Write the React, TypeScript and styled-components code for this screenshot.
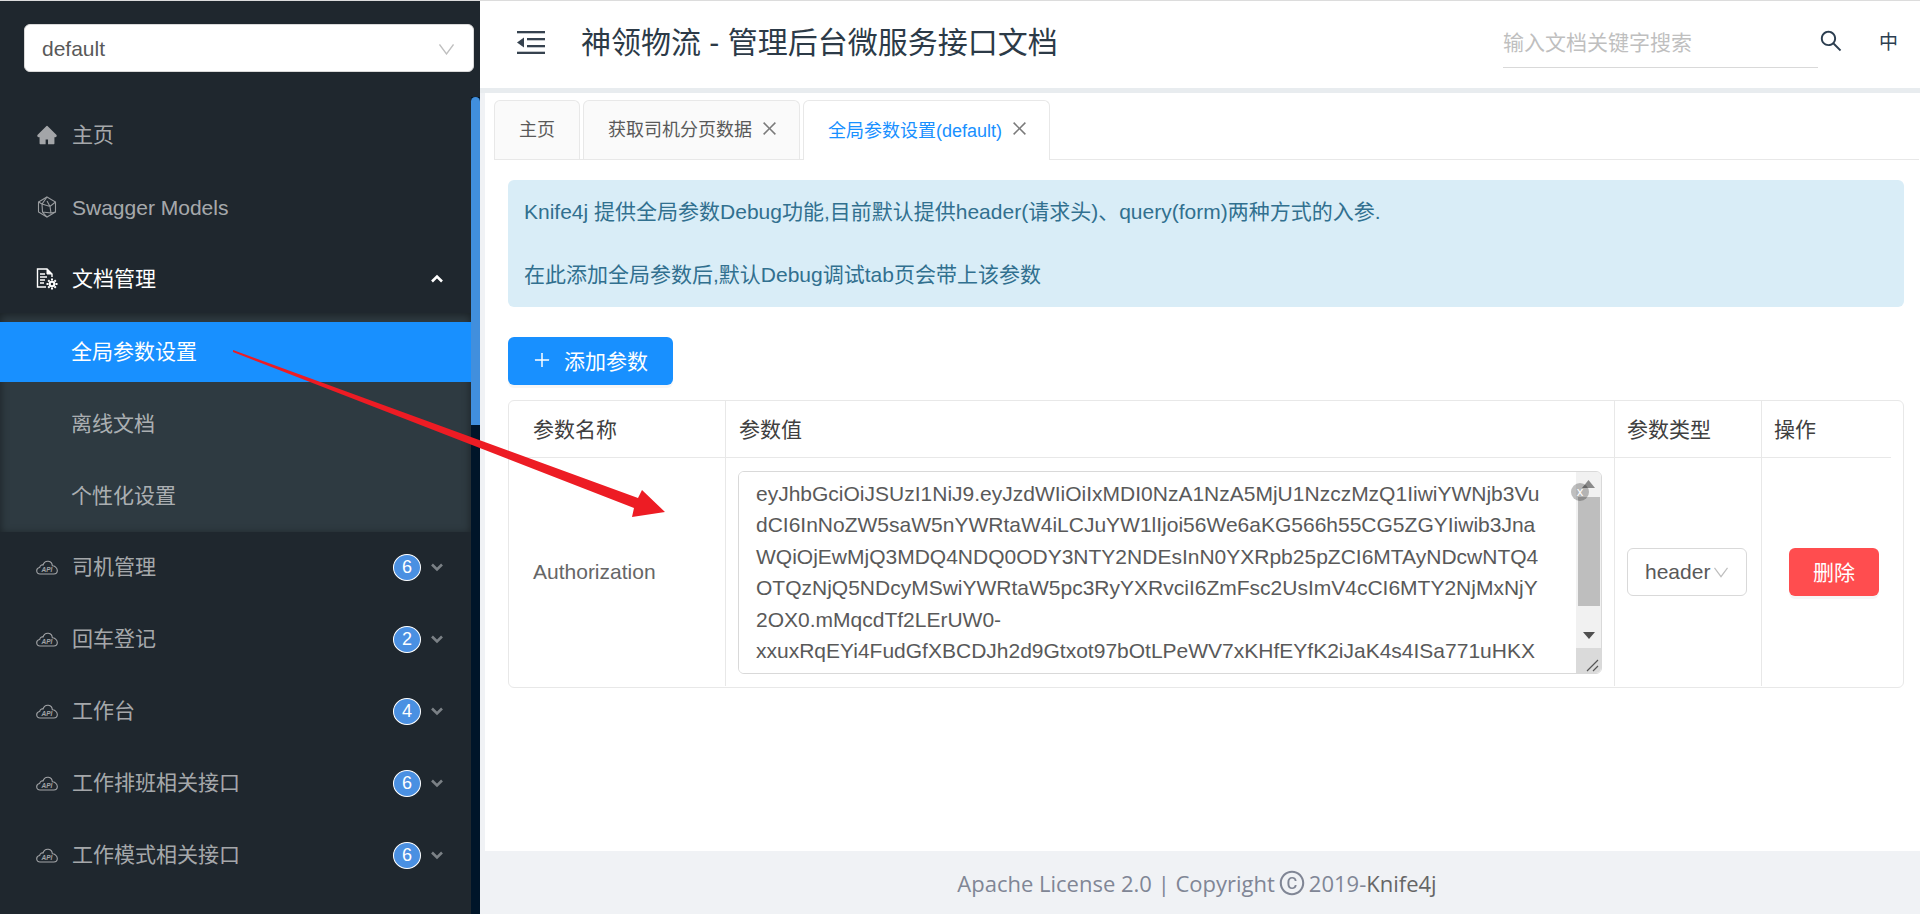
import React from 'react';
import styled, { createGlobalStyle } from 'styled-components';
import { AiFillHome, AiOutlineClose, AiOutlineCopyright, AiOutlinePlus, AiOutlineSearch } from 'react-icons/ai';

const FONT = '"Liberation Sans", "Noto Sans CJK SC", sans-serif';

const GlobalStyle = createGlobalStyle`
  html, body {
    margin: 0;
    padding: 0;
    height: 100%;
    overflow: hidden;
    font-family: ${FONT};
  }
  * {
    box-sizing: border-box;
  }
`;

const Page = styled.div`
  position: relative;
  display: flex;
  width: 1920px;
  height: 914px;
  border-top: 1px solid #dcdcdc;
  overflow: hidden;
`;

/* ---- sidebar ---- */
const Sidebar = styled.aside`
  display: flex;
  flex-direction: column;
  flex: 0 0 480px;
  background: #1f272e;
`;
const SelectWrap = styled.div`
  padding: 23px 6px 25px 24px;
`;
const VersionSelect = styled.div`
  display: flex;
  align-items: center;
  justify-content: space-between;
  height: 48px;
  padding: 2px 19px 0 17px;
  background: #fff;
  border: 1px solid #d9d9d9;
  border-radius: 6px;
  font-size: 21px;
  color: #595959;
`;
const SideBody = styled.div`
  display: flex;
  flex: 1;
  min-height: 0;
`;
const Menu = styled.nav`
  flex: 1;
  padding-top: 8px;
`;
const ScrollTrack = styled.div`
  flex: 0 0 9px;
  background: #001529;
`;
const ScrollThumb = styled.div`
  height: 328px;
  background: #418fdd;
  border-radius: 5px 5px 0 0;
`;
const MenuRow = styled.div<{ $open?: boolean; $tight?: boolean }>`
  display: flex;
  align-items: center;
  height: 60px;
  margin-bottom: ${(p) => (p.$tight ? '4px' : '12px')};
  padding: 0 28px 0 36px;
  font-size: 21px;
  color: ${(p) => (p.$open ? '#fff' : 'rgba(255, 255, 255, 0.62)')};
`;
const MenuIcon = styled.span`
  display: flex;
  align-items: center;
  justify-content: center;
  flex: 0 0 21px;
  height: 24px;
  margin-right: 15px;
  svg {
    display: block;
  }
`;
const MenuLabel = styled.span<{ $latin?: boolean }>`
  flex: 1;
  margin: ${(p) => (p.$latin ? '2px 0 0' : '0 0 5px -1px')};
`;
const Badge = styled.span`
  display: flex;
  align-items: center;
  justify-content: center;
  width: 28px;
  height: 27px;
  margin-right: 10px;
  border: 1.5px solid #fff;
  border-radius: 50%;
  background: #4a90e2;
  color: #fff;
  font-size: 18px;
`;
const SubMenu = styled.div`
  margin-bottom: 5px;
  padding: 9px 0 6px;
  background: #2e3a41;
  box-shadow: inset 0 2px 8px rgba(0, 0, 0, 0.45);
`;
const SubRow = styled.div<{ $active?: boolean }>`
  display: flex;
  align-items: center;
  height: 60px;
  padding: 0 0 5px 71px;
  font-size: 21px;
  background: ${(p) => (p.$active ? '#1890ff' : 'transparent')};
  color: ${(p) => (p.$active ? '#fff' : 'rgba(255, 255, 255, 0.62)')};
  & + & {
    margin-top: 12px;
  }
`;

/* ---- main ---- */
const Main = styled.main`
  display: flex;
  flex-direction: column;
  flex: 1;
  min-width: 0;
  background: #f0f2f5;
`;
const Header = styled.header`
  display: flex;
  align-items: center;
  flex: 0 0 92px;
  padding: 0 22px 8px 37px;
  background: #fff;
  border-bottom: 5px solid #e8ecef;
`;
const Toggle = styled.span`
  display: flex;
  margin: 4px 36px 0 0;
`;
const Title = styled.h1`
  flex: 1;
  margin: 0;
  padding-bottom: 2px;
  font-size: 30px;
  font-weight: 400;
  color: #2c3a47;
`;
const SearchBox = styled.div`
  display: flex;
  align-items: center;
  width: 315px;
  height: 48px;
  margin-top: 6px;
  padding-bottom: 4px;
  border-bottom: 1px solid #d9d9d9;
  font-size: 21px;
  color: #bfbfbf;
`;
const SearchBtn = styled.span`
  display: flex;
  margin-right: 35px;
  color: #2c3e50;
`;
const Lang = styled.span`
  font-size: 19px;
  color: #2c3e50;
`;

const Content = styled.div`
  display: flex;
  flex-direction: column;
  flex: 1;
  margin-left: 5px;
  background: #fff;
`;
const TabBar = styled.div`
  display: flex;
  gap: 3px;
  height: 67px;
  margin: 0 1px 0 9px;
  padding-top: 7px;
  border-bottom: 1.5px solid #e8e8e8;
`;
const Tab = styled.div<{ $active?: boolean; $closable?: boolean }>`
  display: flex;
  align-items: center;
  height: ${(p) => (p.$active ? '60px' : '59px')};
  padding: 0 ${(p) => (p.$closable ? '20px' : '24px')} 4px 24px;
  border: 1.5px solid #e8e8e8;
  border-bottom: 0;
  border-radius: 6px 6px 0 0;
  font-size: 18px;
  background: ${(p) => (p.$active ? '#fff' : '#fafafa')};
  color: ${(p) => (p.$active ? '#1890ff' : '#595959')};
`;
const TabClose = styled.span`
  display: flex;
  margin-left: 8px;
  color: #7a7a7a;
`;
const Panel = styled.section`
  padding: 20px 16px 0 23px;
`;
const Alert = styled.div`
  height: 127px;
  padding: 16px 16px;
  border-radius: 6px;
  background: #d9edf7;
  color: #31708f;
  font-size: 21px;
  line-height: 31.5px;
`;
const AddButton = styled.button`
  display: flex;
  align-items: center;
  width: 165px;
  height: 48px;
  margin: 30px 0 15px;
  padding: 0 0 2px 24px;
  border: 0;
  border-radius: 6px;
  background: #1890ff;
  box-shadow: 0 3px 0 rgba(0, 0, 0, 0.035);
  color: #fff;
  font: 21px ${FONT};
  svg {
    margin-right: 12px;
  }
`;
const ParamTable = styled.div`
  display: grid;
  grid-template-columns: 216px 889px 147px 1fr;
  grid-template-rows: 57px 228px;
  width: 1396px;
  height: 288px;
  border: 1.5px solid #e8e8e8;
  border-radius: 6px;
`;
const HeadCell = styled.div<{ $pad: number; $short?: boolean }>`
  display: flex;
  align-items: center;
  padding: 0 0 3px ${(p) => p.$pad}px;
  margin-right: ${(p) => (p.$short ? '12px' : '0')};
  border-bottom: 1.5px solid #e8e8e8;
  font-size: 21px;
  color: #404040;
  & + & {
    border-left: 1.5px solid #e8e8e8;
  }
`;
const BodyCell = styled.div<{ $pad: number }>`
  display: flex;
  align-items: center;
  padding-left: ${(p) => p.$pad}px;
  font-size: 21px;
  color: #666;
  & + & {
    border-left: 1.5px solid #e8e8e8;
  }
`;
const TokenBox = styled.div`
  position: relative;
  display: flex;
  width: 864px;
  height: 203px;
  border: 1.5px solid #d9d9d9;
  border-radius: 6px;
  overflow: hidden;
`;
const TokenText = styled.textarea`
  flex: 1;
  margin: 0;
  padding: 6px 0 0 17px;
  border: 0;
  outline: 0;
  resize: none;
  overflow: hidden;
  white-space: pre;
  font: 21px/31.6px ${FONT};
  color: #595959;
`;
const FakeScroll = styled.div`
  display: flex;
  flex-direction: column;
  align-items: center;
  flex: 0 0 25px;
  background: #f1f1f1;
`;
const ScrollBtn = styled.div`
  display: flex;
  align-items: center;
  justify-content: center;
  flex: 0 0 25px;
  width: 100%;
`;
const FakeThumb = styled.div`
  flex: 0 0 109px;
  width: 22px;
  background: #bebebe;
`;
const ScrollGap = styled.div`
  flex: 1;
`;
const Resizer = styled.div`
  display: flex;
  flex: 0 0 25px;
  width: 100%;
  background: #dadada;
`;
const ClearDot = styled.span`
  position: absolute;
  top: 11px;
  right: 12px;
  display: flex;
  align-items: center;
  justify-content: center;
  width: 18px;
  height: 18px;
  border-radius: 50%;
  background: rgba(0, 0, 0, 0.25);
  color: #fff;
  font-size: 13px;
  line-height: 1;
`;
const TypeSelect = styled.div`
  display: flex;
  align-items: center;
  justify-content: space-between;
  width: 120px;
  height: 48px;
  padding: 0 18px 0 17px;
  border: 1.5px solid #d9d9d9;
  border-radius: 6px;
  font-size: 21px;
  color: #595959;
`;
const DeleteButton = styled.button`
  width: 90px;
  height: 48px;
  padding: 0 0 3px;
  border: 0;
  border-radius: 6px;
  background: #ff4d4f;
  box-shadow: 0 3px 0 rgba(0, 0, 0, 0.035);
  color: #fff;
  font: 21px ${FONT};
`;
const Footer = styled.footer`
  display: flex;
  align-items: center;
  justify-content: center;
  flex: 0 0 63px;
  padding-right: 6px;
  font-family: "Open Sans", sans-serif;
  font-size: 22px;
  color: #808695;
  svg {
    margin: 0 3px;
  }
`;
const FooterLink = styled.span`
  color: #666;
`;
const Arrow = styled.svg`
  position: absolute;
  top: 0;
  left: 0;
  pointer-events: none;
`;

/* ---- drawn icons ---- */
const Chevron = ({ up, color, size = 12, weight = 2.6 }: { up?: boolean; color: string; size?: number; weight?: number }) => (
  <svg width={size} height={size} viewBox="0 0 12 12" fill="none" stroke={color} strokeWidth={weight}>
    <path d={up ? 'M1 8.5 6 3.5l5 5' : 'M1 3.5l5 5 5-5'} />
  </svg>
);
const ThinCaret = ({ width = 15, color = '#bfbfbf' }: { width?: number; color?: string }) => (
  <svg width={width} height="11" viewBox="0 0 15 11" fill="none" stroke={color} strokeWidth="1.3">
    <path d="M.5.5 7.5 10l7-9.5" />
  </svg>
);
const ModelIcon = () => (
  <svg width="20" height="22" viewBox="0 0 20 22" fill="none" stroke="#9a9da0" strokeWidth="1.1">
    <path d="M10 1l8.5 5v10L10 21l-8.5-5V6z" />
    <path d="M10 1 5 8l-3.5-2M5 8l.5 8 4.5 5M5 8l8 2.5 5.500-4.500M13 10.500 14 17l4.500-1M5.500 16 14 17M10 5l3 5.500" />
  </svg>
);
const DocGearIcon = () => (
  <svg width="22" height="22" viewBox="0 0 22 22" fill="none" stroke="#fff">
    <path d="M10 19H1.500V1H11l5 5v3" strokeWidth="1.4" />
    <path d="M11 1v5h5z" fill="#fff" strokeWidth="1" />
    <path d="M4 6h5M4 9h7M4 12h5M4 15h4" strokeWidth="1.4" />
    <circle cx="16" cy="16" r="2.300" strokeWidth="2" />
    <path d="M16 10.500v2M16 19.500v2M10.500 16h2M19.500 16h2M12.200 12.200l1.400 1.400M18.400 18.400l1.400 1.400M12.200 19.800l1.400-1.400M18.400 13.600l1.400-1.400" strokeWidth="2" />
  </svg>
);
const ApiCloud = () => (
  <svg width="22" height="15" viewBox="0 0 22 15" fill="none">
    <path
      d="M5 14H4C2 14 .7 12.600.7 10.800.7 9 2 7.700 3.700 7.500 4 5.500 5.600 4.600 7 5 8 2.300 10.200 1 12.400 1.300 14.800 1.700 16.200 3.500 16.300 5.800 18.500 5.800 21.300 7.800 21.300 10.500 21.300 12.600 19.600 14 17.800 14Z"
      stroke="#a3a5a8"
      strokeWidth="1.1"
    />
    <text x="11" y="11.600" textAnchor="middle" fontFamily="Liberation Sans, sans-serif" fontSize="6.500" fontStyle="italic" fontWeight="700" fill="#a3a5a8">
      API
    </text>
  </svg>
);
const OutdentIcon = () => (
  <svg width="28" height="23" viewBox="0 0 28 23" fill="#36424f">
    <rect x="0" y="0" width="28" height="2.300" />
    <rect x="10" y="7" width="18" height="2.300" />
    <rect x="10" y="14" width="18" height="2.300" />
    <rect x="0" y="20.700" width="28" height="2.300" />
    <path d="M7 6.500v10L0 11.500z" />
  </svg>
);

const groups = [
  { name: '司机管理', count: 6 },
  { name: '回车登记', count: 2 },
  { name: '工作台', count: 4 },
  { name: '工作排班相关接口', count: 6 },
  { name: '工作模式相关接口', count: 6 },
];

const TOKEN = [
  'eyJhbGciOiJSUzI1NiJ9.eyJzdWIiOiIxMDI0NzA1NzA5MjU1NzczMzQ1IiwiYWNjb3Vu',
  'dCI6InNoZW5saW5nYWRtaW4iLCJuYW1lIjoi56We6aKG566h55CG5ZGYIiwib3Jna',
  'WQiOjEwMjQ3MDQ4NDQ0ODY3NTY2NDEsInN0YXRpb25pZCI6MTAyNDcwNTQ4',
  'OTQzNjQ5NDcyMSwiYWRtaW5pc3RyYXRvciI6ZmFsc2UsImV4cCI6MTY2NjMxNjY',
  '2OX0.mMqcdTf2LErUW0-',
  'xxuxRqEYi4FudGfXBCDJh2d9Gtxot97bOtLPeWV7xKHfEYfK2iJaK4s4ISa771uHKX',
].join('\n');

export default function App() {
  return (
    <>
      <GlobalStyle />
      <Page>
        <Sidebar>
          <SelectWrap>
            <VersionSelect>
              default
              <ThinCaret />
            </VersionSelect>
          </SelectWrap>
          <SideBody>
            <Menu>
              <MenuRow>
                <MenuIcon>
                  <AiFillHome size={22} color="#a3a5a8" />
                </MenuIcon>
                <MenuLabel>主页</MenuLabel>
              </MenuRow>
              <MenuRow>
                <MenuIcon>
                  <ModelIcon />
                </MenuIcon>
                <MenuLabel $latin>Swagger Models</MenuLabel>
              </MenuRow>
              <MenuRow $open $tight>
                <MenuIcon>
                  <DocGearIcon />
                </MenuIcon>
                <MenuLabel>文档管理</MenuLabel>
                <Chevron up color="#fff" />
              </MenuRow>
              <SubMenu>
                <SubRow $active>全局参数设置</SubRow>
                <SubRow>离线文档</SubRow>
                <SubRow>个性化设置</SubRow>
              </SubMenu>
              {groups.map((g) => (
                <MenuRow key={g.name}>
                  <MenuIcon>
                    <ApiCloud />
                  </MenuIcon>
                  <MenuLabel>{g.name}</MenuLabel>
                  <Badge>{g.count}</Badge>
                  <Chevron color="#7b8186" />
                </MenuRow>
              ))}
            </Menu>
            <ScrollTrack>
              <ScrollThumb />
            </ScrollTrack>
          </SideBody>
        </Sidebar>

        <Main>
          <Header>
            <Toggle>
              <OutdentIcon />
            </Toggle>
            <Title>神领物流 - 管理后台微服务接口文档</Title>
            <SearchBox>输入文档关键字搜索</SearchBox>
            <SearchBtn>
              <AiOutlineSearch size={26} />
            </SearchBtn>
            <Lang>中</Lang>
          </Header>

          <Content>
            <TabBar>
              <Tab>主页</Tab>
              <Tab $closable>
                获取司机分页数据
                <TabClose>
                  <AiOutlineClose size={19} />
                </TabClose>
              </Tab>
              <Tab $active $closable>
                全局参数设置(default)
                <TabClose>
                  <AiOutlineClose size={19} />
                </TabClose>
              </Tab>
            </TabBar>
            <Panel>
              <Alert>
                Knife4j 提供全局参数Debug功能,目前默认提供header(请求头)、query(form)两种方式的入参.
                <br />
                <br />
                在此添加全局参数后,默认Debug调试tab页会带上该参数
              </Alert>
              <AddButton>
                <AiOutlinePlus size={20} />
                添加参数
              </AddButton>
              <ParamTable>
                <HeadCell $pad={24}>参数名称</HeadCell>
                <HeadCell $pad={13}>参数值</HeadCell>
                <HeadCell $pad={12}>参数类型</HeadCell>
                <HeadCell $pad={12} $short>
                  操作
                </HeadCell>
                <BodyCell $pad={24}>Authorization</BodyCell>
                <BodyCell $pad={12}>
                  <TokenBox>
                    <TokenText readOnly wrap="off" defaultValue={TOKEN} />
                    <FakeScroll>
                      <ScrollBtn>
                        <svg width="13" height="8" viewBox="0 0 13 8" fill="#8a8a8a">
                          <path d="M6.500 0 13 8H0z" />
                        </svg>
                      </ScrollBtn>
                      <FakeThumb />
                      <ScrollGap />
                      <ScrollBtn>
                        <svg width="12" height="7" viewBox="0 0 12 7" fill="#505050">
                          <path d="M0 0h12L6 7z" />
                        </svg>
                      </ScrollBtn>
                      <Resizer>
                        <svg width="25" height="25" viewBox="0 0 25 25" fill="none" stroke="#555" strokeWidth="1.2">
                          <path d="M11 23 22 12M17 23l5-5" />
                        </svg>
                      </Resizer>
                    </FakeScroll>
                    <ClearDot>x</ClearDot>
                  </TokenBox>
                </BodyCell>
                <BodyCell $pad={12}>
                  <TypeSelect>
                    header
                    <ThinCaret width={14} />
                  </TypeSelect>
                </BodyCell>
                <BodyCell $pad={27}>
                  <DeleteButton>删除</DeleteButton>
                </BodyCell>
              </ParamTable>
            </Panel>
          </Content>

          <Footer>
            Apache License 2.0 | Copyright
            <AiOutlineCopyright size={28} />
            2019-<FooterLink>Knife4j</FooterLink>
          </Footer>
        </Main>

        <Arrow width="1920" height="914" viewBox="0 0 1920 914">
          <path d="M233 349 638 497 642 489 665 511 632 516 634 507 233 351Z" fill="#ed1c24" />
        </Arrow>
      </Page>
    </>
  );
}
